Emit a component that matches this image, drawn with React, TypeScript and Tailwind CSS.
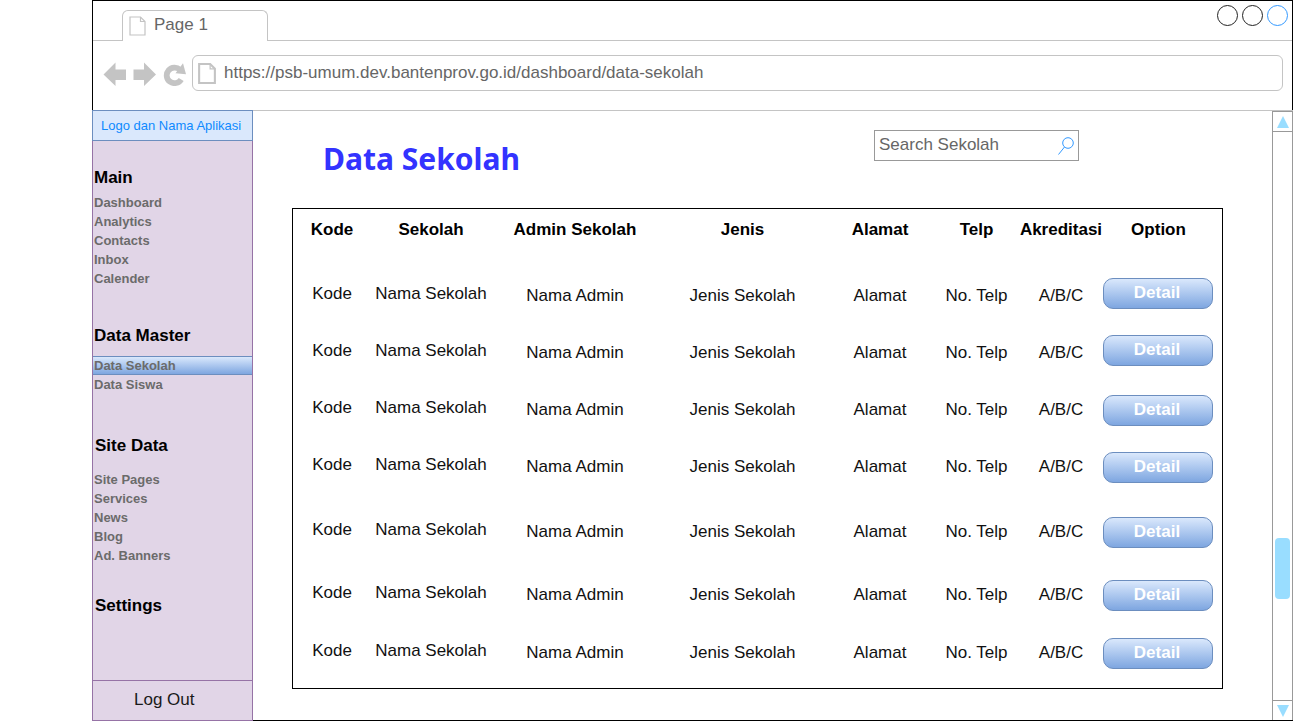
type Item = { label: string; active?: boolean };

const mainLinks: Item[] = [
  { label: "Dashboard" },
  { label: "Analytics" },
  { label: "Contacts" },
  { label: "Inbox" },
  { label: "Calender" },
];
const masterLinks: Item[] = [{ label: "Data Sekolah", active: true }, { label: "Data Siswa" }];
const siteLinks: Item[] = [
  { label: "Site Pages" },
  { label: "Services" },
  { label: "News" },
  { label: "Blog" },
  { label: "Ad. Banners" },
];

const columns = [
  { label: "Kode", width: "w-[78px]" },
  { label: "Sekolah", width: "w-[120px]" },
  { label: "Admin Sekolah", width: "w-[168px]" },
  { label: "Jenis", width: "w-[167px]" },
  { label: "Alamat", width: "w-[108px]" },
  { label: "Telp", width: "w-[85px]" },
  { label: "Akreditasi", width: "w-[84px]" },
  { label: "Option", width: "w-[119px] pr-2" },
];

const school = {
  kode: "Kode",
  sekolah: "Nama Sekolah",
  admin: "Nama Admin",
  jenis: "Jenis Sekolah",
  alamat: "Alamat",
  telp: "No. Telp",
  akreditasi: "A/B/C",
};

const low = { name: "pt-[6px]", info: "pt-[8px]" };
const high = { name: "pt-[3px]", info: "pt-[5px]" };

const rows = [
  { ...school, height: "h-[57px]", pad: low },
  { ...school, height: "h-[60px]", pad: low },
  { ...school, height: "h-[57px]", pad: high },
  { ...school, height: "h-[65px]", pad: high },
  { ...school, height: "h-[63px]", pad: high },
  { ...school, height: "h-[58px]", pad: high },
  { ...school, height: "h-[50px]", pad: high },
];

function PageIcon({ className, stroke }: { className: string; stroke: number }) {
  return (
    <svg viewBox="0 0 17 20" className={className} fill="none" stroke="#c4c4c4" aria-hidden="true">
      <path d="M1 1H11.500L16 5.500V19H1Z" strokeWidth={stroke} />
      <path d="M11.500 1V5.500H16" strokeWidth="1.200" />
    </svg>
  );
}

function BrowserBar() {
  return (
    <header className="border-x border-t border-black text-[#666666]">
      <div className="flex h-10">
        <div className="w-[29px] border-b border-[#c4c4c4]" />
        <div className="mt-[9px] flex w-[146px] items-center gap-2 rounded-t-md border-x border-t border-[#c4c4c4] pb-[2px] pl-[6px]">
          <PageIcon className="mt-[2px] h-5 w-[17px]" stroke={1.2} />
          <span>Page 1</span>
        </div>
        <div className="flex flex-1 items-start justify-end gap-1 border-b border-[#c4c4c4] pt-1 pr-1">
          <button aria-label="Minimize" className="size-[21px] rounded-full border border-[#222222]" />
          <button aria-label="Maximize" className="size-[21px] rounded-full border border-[#222222]" />
          <button aria-label="Close" className="size-[21px] rounded-full border border-[#3399ff]" />
        </div>
      </div>
      <div className="flex h-[69px] items-start pt-[14px] pr-[9px] pl-[10px]">
        <div className="flex gap-[7px] pt-[7px]">
          <button aria-label="Back">
            <svg viewBox="0 0 23 24" className="h-6 w-[23px]" fill="#c4c4c4">
              <path d="M0.500 12.500L12.500 0.500V7.500H23V18H12.500V24Z" />
            </svg>
          </button>
          <button aria-label="Forward">
            <svg viewBox="0 0 23 24" className="h-6 w-[23px]" fill="#c4c4c4">
              <path d="M23 12.500L11 0.500V7.500H0.500V18H11V24Z" />
            </svg>
          </button>
          <button aria-label="Reload">
            <svg viewBox="0 0 23 24" className="h-6 w-[23px]">
              <path d="M17 7.800A7.800 7.800 0 1 0 18.200 17.400" fill="none" stroke="#c4c4c4" strokeWidth="5.800" />
              <path d="M20 1.300L23 12.300L12.500 11.300Z" fill="#c4c4c4" />
            </svg>
          </button>
        </div>
        <div className="ml-[6px] flex h-9 flex-1 items-center gap-2 rounded-md border border-[#c4c4c4] pl-[5px]">
          <PageIcon className="h-[21px] w-[18px]" stroke={2} />
          <input
            aria-label="Address"
            defaultValue="https://psb-umum.dev.bantenprov.go.id/dashboard/data-sekolah"
            className="flex-1 outline-none"
          />
        </div>
      </div>
    </header>
  );
}

function Links({ items }: { items: Item[] }) {
  return (
    <ul className="text-[13px] leading-[19px] font-bold text-[#6b6b6b]">
      {items.map((item) => (
        <li
          key={item.label}
          className={
            item.active
              ? "h-[19px] border-y border-[#6c8ebf] bg-linear-to-b from-[#dae8fc] to-[#7ea6e0] pl-px leading-[17px]"
              : "h-[19px] pl-px"
          }
        >
          <a href="#">{item.label}</a>
        </li>
      ))}
    </ul>
  );
}

function Sidebar() {
  return (
    <aside className="flex w-[161px] shrink-0 flex-col">
      <div className="flex h-[31px] items-center border border-[#6c8ebf] bg-[#dae8fc] pl-2 text-[13px] text-[#0e8aff]">
        Logo dan Nama Aplikasi
      </div>
      <nav className="flex-1 border-x border-[#9673a6] bg-[#e1d5e7] pt-[27px] pb-8 leading-5">
        <h2 className="mb-[5px] pl-px font-bold">Main</h2>
        <Links items={mainLinks} />
        <h2 className="mt-[38px] mb-[10px] pl-px font-bold">Data Master</h2>
        <Links items={masterLinks} />
        <h2 className="mt-[42px] mb-[14px] pl-[2px] font-bold">Site Data</h2>
        <Links items={siteLinks} />
        <h2 className="mt-[31px] pl-[2px] font-bold">Settings</h2>
      </nav>
      <a
        href="#"
        className="flex h-[41px] items-center border border-[#9673a6] bg-[#e1d5e7] pb-[2px] pl-[41px] text-[#1a1a1a]"
      >
        Log Out
      </a>
    </aside>
  );
}

function SchoolTable() {
  return (
    <div className="border border-black">
      <table className="w-full table-fixed text-center leading-5 whitespace-nowrap">
        <thead>
          <tr className="h-[69px]">
            {columns.map((c) => (
              <th key={c.label} className={`pt-[11px] align-top font-bold ${c.width}`}>
                {c.label}
              </th>
            ))}
          </tr>
        </thead>
        <tbody className="align-top text-[#111111]">
          {rows.map((r, i) => (
            <tr key={i} className={r.height}>
              <td className={r.pad.name}>{r.kode}</td>
              <td className={r.pad.name}>{r.sekolah}</td>
              <td className={r.pad.info}>{r.admin}</td>
              <td className={r.pad.info}>{r.jenis}</td>
              <td className={r.pad.info}>{r.alamat}</td>
              <td className={r.pad.info}>{r.telp}</td>
              <td className={r.pad.info}>{r.akreditasi}</td>
              <td className="pr-[9px]">
                <button className="block h-[31px] w-full rounded-[10px] border border-[#6c8ebf] bg-linear-to-b from-[#dae8fc] to-[#7ea6e0] pr-[2px] pb-[2px] font-bold text-white">
                  Detail
                </button>
              </td>
            </tr>
          ))}
        </tbody>
      </table>
    </div>
  );
}

function Scrollbar() {
  return (
    <div className="flex w-[21px] shrink-0 flex-col border-x border-t border-[#999999]">
      <button aria-label="Scroll up" className="flex h-5 items-center justify-center border-b border-[#999999]">
        <svg viewBox="0 0 12 12" className="size-3" fill="#99ddff">
          <path d="M6 0L12 12H0Z" />
        </svg>
      </button>
      <div className="flex flex-1 flex-col justify-end px-[2px] pb-[101px]">
        <div className="h-[61px] rounded-[4px] bg-[#99ddff]" />
      </div>
      <button aria-label="Scroll down" className="flex h-5 items-center justify-center border-t border-[#999999]">
        <svg viewBox="0 0 12 12" className="size-3" fill="#99ddff">
          <path d="M0 0H12L6 12Z" />
        </svg>
      </button>
    </div>
  );
}

export default function App() {
  return (
    <div className="flex min-h-screen flex-col bg-white pl-[92px] font-['Liberation_Sans',Arial,sans-serif] text-[17px] leading-5 text-black">
      <BrowserBar />
      <div className="flex flex-1">
        <Sidebar />
        <div className="flex flex-1 border-t border-b border-t-[#c4c4c4] border-b-black">
          <main className="flex-1 pt-[19px] pr-[49px] pb-[31px] pl-[39px]">
            <div className="flex h-[78px] items-start justify-between pr-36 pl-[31px]">
              <h1 className="pt-[11px] font-[Tahoma,'Noto_Sans',sans-serif] text-[30px] leading-9 font-bold text-[#3333ff]">
                Data Sekolah
              </h1>
              <div className="flex h-[31px] w-[205px] items-center justify-between border border-[#999999] pr-1 pl-[4px]">
                <input
                  type="text"
                  aria-label="Search Sekolah"
                  placeholder="Search Sekolah"
                  className="mb-[2px] w-40 outline-none placeholder:text-[#666666]"
                />
                <svg viewBox="0 0 16 18" className="h-[18px] w-4" fill="none" stroke="#3399ff" aria-hidden="true">
                  <circle cx="10" cy="6" r="5.300" />
                  <path d="M6.500 10L0.500 17.500" />
                </svg>
              </div>
            </div>
            <SchoolTable />
          </main>
          <Scrollbar />
        </div>
      </div>
    </div>
  );
}
